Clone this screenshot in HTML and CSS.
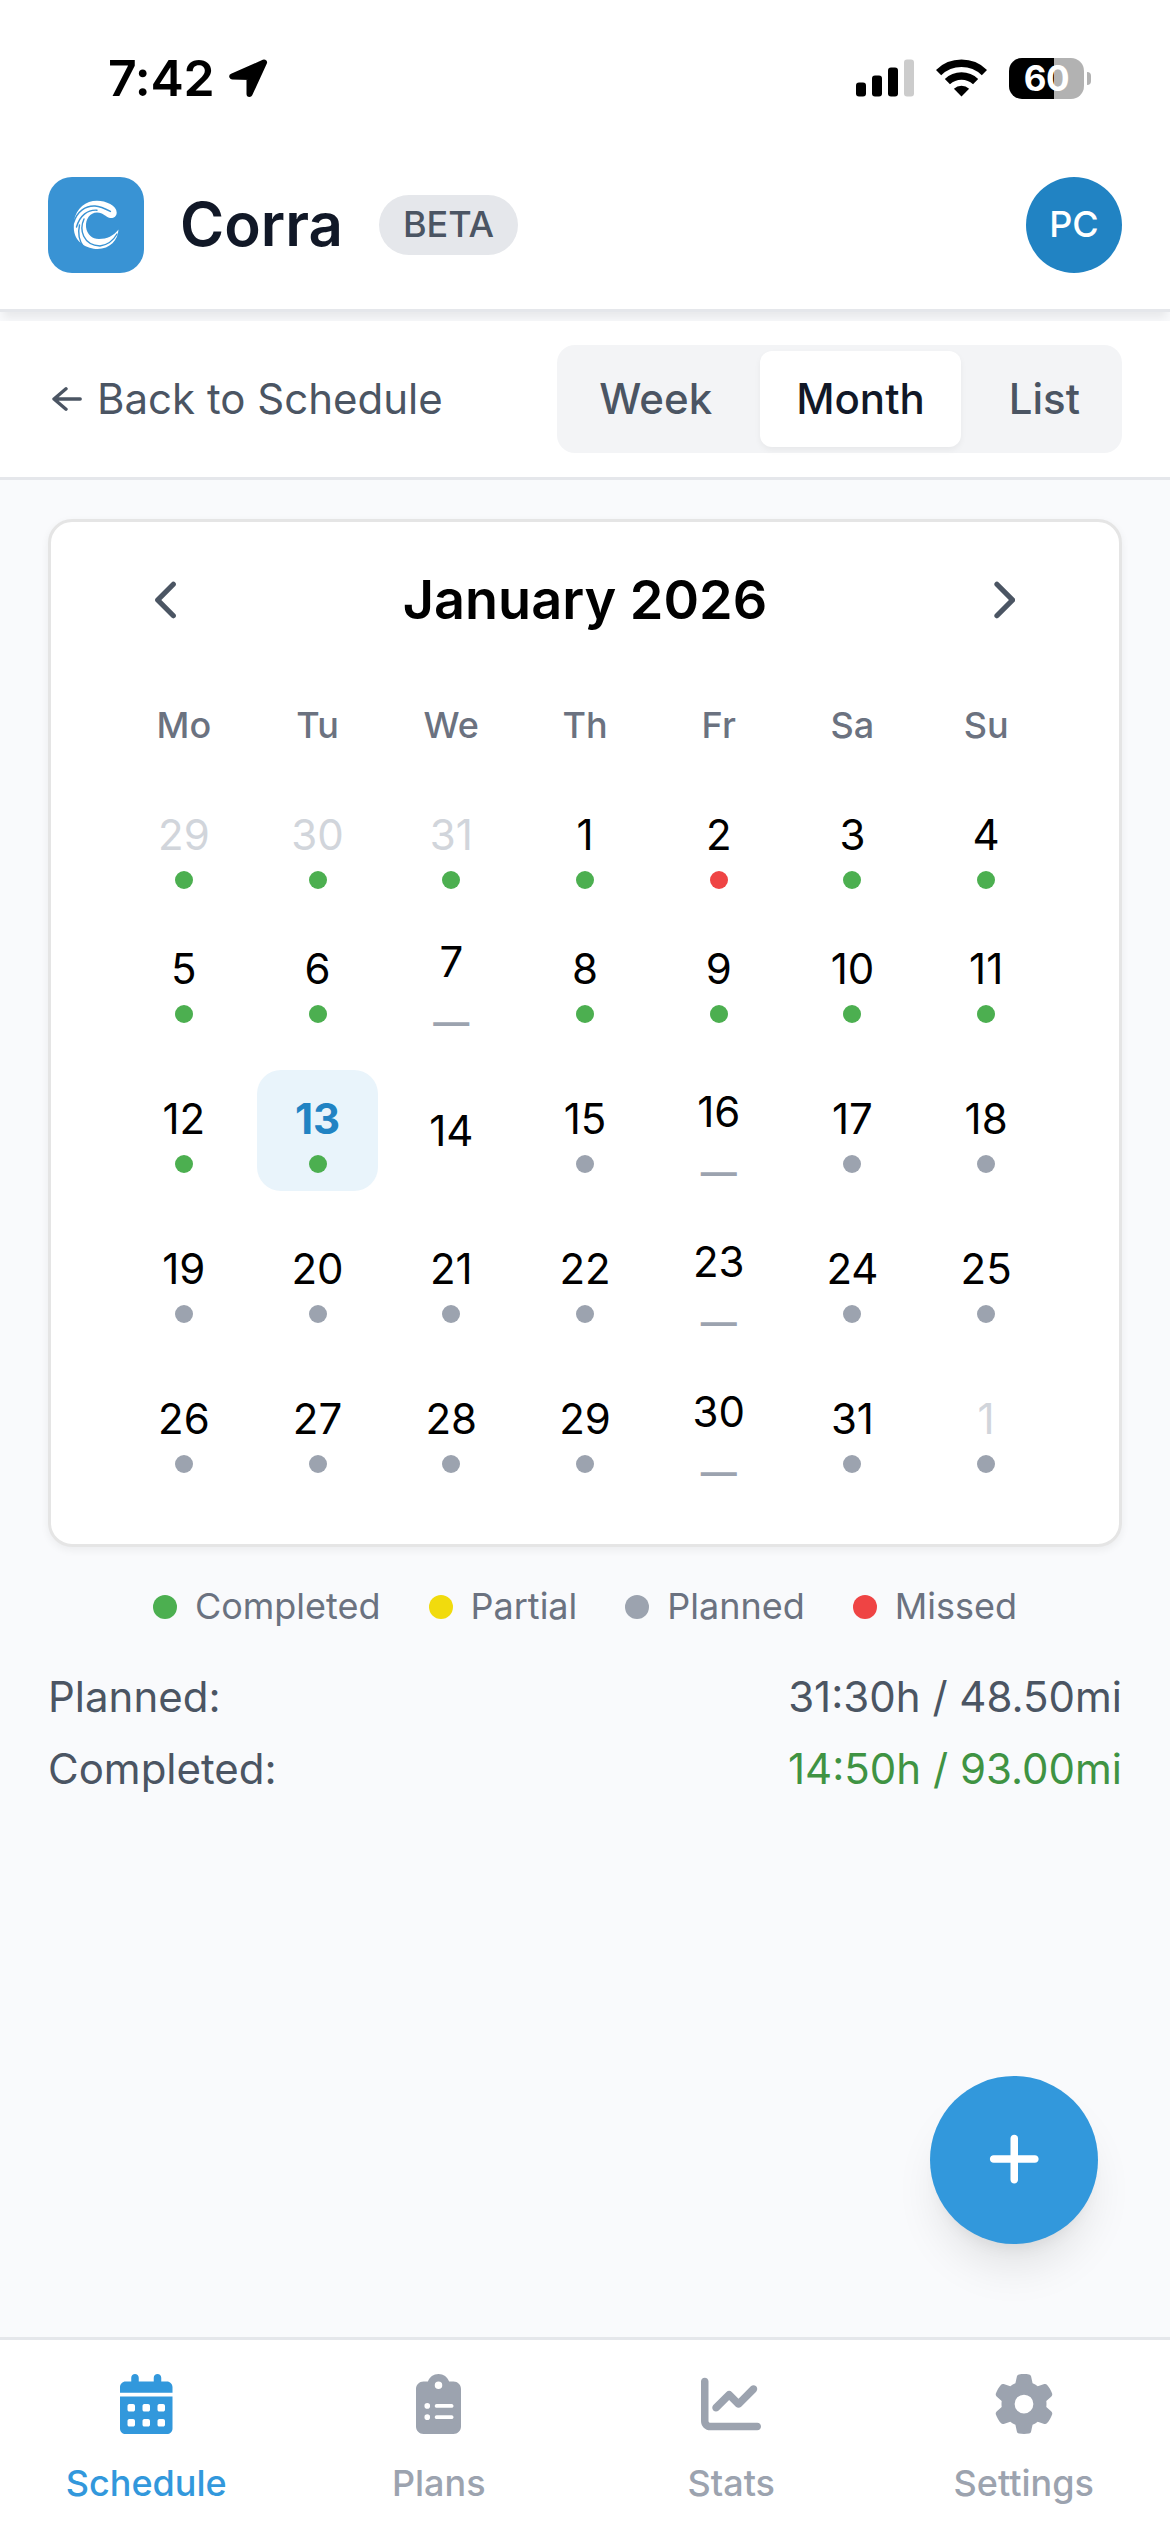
FILE: index.html
```html
<!DOCTYPE html>
<html lang="en">
<head>
    <meta charset="UTF-8">
    <meta name="viewport" content="width=device-width, initial-scale=1.0">
    <title>Corra - Schedule</title>
    <link rel="stylesheet" href="styles.css">
</head>
<body>

<div class="status-bar">
    <div class="status-left">
        <span class="time">7:42</span>
        <svg class="location" viewBox="0 0 40 40"><path d="M36 4.500L4.300 18.600L21.500 19L21.500 36Z" fill="#000" stroke="#000" stroke-width="6" stroke-linejoin="round"/></svg>
    </div>
    <div class="status-right">
        <svg class="signal" viewBox="0 0 58 38">
            <rect x="0" y="23.500" width="10" height="14" rx="3"/>
            <rect x="16" y="16.500" width="10" height="21" rx="3"/>
            <rect x="32" y="8.500" width="10" height="29" rx="3"/>
            <rect x="48" y="0.500" width="10" height="37" rx="3" fill="#ccc"/>
        </svg>
        <svg class="wifi" viewBox="0 0 51 38">
            <g fill="none" stroke="#000" stroke-width="7.500">
                <path d="M2.600 13.600A33 33 0 0 1 48.400 13.600"/>
                <path d="M11.400 22.600A20.500 20.500 0 0 1 39.600 22.600"/>
            </g>
            <path d="M25.500 37.500L17.900 29.700A11 11 0 0 1 33.100 29.700Z"/>
        </svg>
        <div class="battery">
            <div class="battery-body">60</div>
            <div class="battery-tip"></div>
        </div>
    </div>
</div>

<header class="header">
    <svg class="logo" viewBox="0 0 96 96">
        <rect width="96" height="96" rx="24" fill="#3993d4"/>
        <path fill="#fff" d="M26 44C28 31 38 23.700 49 23.700C58 23.700 68.700 28.500 68.700 35.500C68.700 39.500 65.500 41.500 62 41C57.500 40 55.500 35.500 49 35.500C42 35.500 37.500 42 38 50C39 57.500 44 62 51 62C59 62 65.500 59 70.500 52.500C70 63 62 72 49.500 72C40 72 25.500 66 25.800 50Z"/>
        <g fill="none" stroke="#3993d4" stroke-width="1.400" stroke-linecap="round">
            <path d="M25.500 46C29 34 38 28.500 47 29C53 29.300 57 31.500 62.500 34.500"/>
            <path d="M28.500 50C32 38 40 32.500 49 33.200"/>
            <path d="M31.500 48C29.500 57 31 64 36 70.500"/>
            <path d="M36 42C31 53 35 68 52 69C59 68 65 64 69 57"/>
        </g>
    </svg>
    <h1>Corra</h1>
    <span class="badge">BETA</span>
    <div class="avatar">PC</div>
</header>

<div class="toolbar">
    <a class="back">
        <svg viewBox="0 0 30 24"><path d="M28.200 12H2M14 1.800L2 12L14 22.200" fill="none" stroke="currentColor" stroke-width="3.400" stroke-linecap="round" stroke-linejoin="round"/></svg>
        <span>Back to Schedule</span>
    </a>
    <div class="tabs">
        <button class="tab">Week</button>
        <button class="tab active">Month</button>
        <button class="tab">List</button>
    </div>
</div>

<main>
    <div class="card">
        <div class="month-nav">
            <button class="prev"><svg viewBox="0 0 320 512"><path d="M9.400 233.400c-12.500 12.500-12.500 32.800 0 45.300l192 192c12.500 12.500 32.800 12.500 45.300 0s12.500-32.800 0-45.300L77.300 256 246.600 86.600c12.500-12.500 12.500-32.800 0-45.300s-32.800-12.500-45.300 0l-192 192z"/></svg></button>
            <h2>January 2026</h2>
            <button class="next"><svg viewBox="0 0 320 512"><path d="M310.600 233.400c12.500 12.500 12.500 32.800 0 45.300l-192 192c-12.500 12.500-32.800 12.500-45.300 0s-12.500-32.800 0-45.300L242.700 256 73.400 86.600c-12.500-12.500-12.500-32.800 0-45.300s32.800-12.500 45.300 0l192 192z"/></svg></button>
        </div>
        <div class="weekdays">
            <span>Mo</span><span>Tu</span><span>We</span><span>Th</span><span>Fr</span><span>Sa</span><span>Su</span>
        </div>
        <div class="days">
            <div class="day other">29<i class="dot completed"></i></div>
            <div class="day other">30<i class="dot completed"></i></div>
            <div class="day other">31<i class="dot completed"></i></div>
            <div class="day">1<i class="dot completed"></i></div>
            <div class="day">2<i class="dot missed"></i></div>
            <div class="day">3<i class="dot completed"></i></div>
            <div class="day">4<i class="dot completed"></i></div>

            <div class="day">5<i class="dot completed"></i></div>
            <div class="day">6<i class="dot completed"></i></div>
            <div class="day">7<span class="rest">—</span></div>
            <div class="day">8<i class="dot completed"></i></div>
            <div class="day">9<i class="dot completed"></i></div>
            <div class="day">10<i class="dot completed"></i></div>
            <div class="day">11<i class="dot completed"></i></div>

            <div class="day">12<i class="dot completed"></i></div>
            <div class="day today">13<i class="dot completed"></i></div>
            <div class="day">14</div>
            <div class="day">15<i class="dot planned"></i></div>
            <div class="day">16<span class="rest">—</span></div>
            <div class="day">17<i class="dot planned"></i></div>
            <div class="day">18<i class="dot planned"></i></div>

            <div class="day">19<i class="dot planned"></i></div>
            <div class="day">20<i class="dot planned"></i></div>
            <div class="day">21<i class="dot planned"></i></div>
            <div class="day">22<i class="dot planned"></i></div>
            <div class="day">23<span class="rest">—</span></div>
            <div class="day">24<i class="dot planned"></i></div>
            <div class="day">25<i class="dot planned"></i></div>

            <div class="day">26<i class="dot planned"></i></div>
            <div class="day">27<i class="dot planned"></i></div>
            <div class="day">28<i class="dot planned"></i></div>
            <div class="day">29<i class="dot planned"></i></div>
            <div class="day">30<span class="rest">—</span></div>
            <div class="day">31<i class="dot planned"></i></div>
            <div class="day other">1<i class="dot planned"></i></div>
        </div>
    </div>

    <div class="legend">
        <div class="legend-item"><i class="dot completed"></i>Completed</div>
        <div class="legend-item"><i class="dot partial"></i>Partial</div>
        <div class="legend-item"><i class="dot planned"></i>Planned</div>
        <div class="legend-item"><i class="dot missed"></i>Missed</div>
    </div>

    <div class="totals">
        <div class="total-row"><span>Planned:</span><span>31:30h / 48.50mi</span></div>
        <div class="total-row"><span>Completed:</span><span class="done">14:50h / 93.00mi</span></div>
    </div>

    <button class="fab">
        <svg viewBox="0 0 448 512"><path d="M256 80c0-17.700-14.300-32-32-32s-32 14.300-32 32V224H48c-17.700 0-32 14.300-32 32s14.300 32 32 32H192V432c0 17.700 14.300 32 32 32s32-14.300 32-32V288H400c17.700 0 32-14.300 32-32s-14.300-32-32-32H256V80z"/></svg>
    </button>
</main>

<nav class="bottom-nav">
    <a class="nav-item active">
        <svg viewBox="0 0 448 512"><path d="M128 0c17.700 0 32 14.300 32 32V64H288V32c0-17.700 14.300-32 32-32s32 14.300 32 32V64h48c26.500 0 48 21.500 48 48v48H0V112C0 85.500 21.500 64 48 64H96V32c0-17.700 14.300-32 32-32zM0 192H448V464c0 26.500-21.500 48-48 48H48c-26.500 0-48-21.500-48-48V192zm64 80v32c0 8.800 7.200 16 16 16h32c8.800 0 16-7.200 16-16V272c0-8.800-7.200-16-16-16H80c-8.800 0-16 7.200-16 16zm128 0v32c0 8.800 7.200 16 16 16h32c8.800 0 16-7.200 16-16V272c0-8.800-7.200-16-16-16H208c-8.800 0-16 7.200-16 16zm144-16c-8.800 0-16 7.200-16 16v32c0 8.800 7.200 16 16 16h32c8.800 0 16-7.200 16-16V272c0-8.800-7.200-16-16-16H336zM64 400v32c0 8.800 7.200 16 16 16h32c8.800 0 16-7.200 16-16V400c0-8.800-7.200-16-16-16H80c-8.800 0-16 7.200-16 16zm144-16c-8.800 0-16 7.200-16 16v32c0 8.800 7.200 16 16 16h32c8.800 0 16-7.200 16-16V400c0-8.800-7.200-16-16-16H208zm112 16v32c0 8.800 7.200 16 16 16h32c8.800 0 16-7.200 16-16V400c0-8.800-7.200-16-16-16H336c-8.800 0-16 7.200-16 16z"/></svg>
        <span>Schedule</span>
    </a>
    <a class="nav-item">
        <svg viewBox="0 0 384 512"><path d="M192 0c-41.800 0-77.400 26.700-90.500 64H64C28.700 64 0 92.700 0 128V448c0 35.300 28.700 64 64 64H320c35.300 0 64-28.700 64-64V128c0-35.300-28.700-64-64-64H282.500C269.400 26.700 233.800 0 192 0zm0 64a32 32 0 1 1 0 64 32 32 0 1 1 0-64zM72 272a24 24 0 1 1 48 0 24 24 0 1 1 -48 0zm104-16H304c8.800 0 16 7.200 16 16s-7.200 16-16 16H176c-8.800 0-16-7.200-16-16s7.200-16 16-16zM72 368a24 24 0 1 1 48 0 24 24 0 1 1 -48 0zm88 0c0-8.800 7.200-16 16-16H304c8.800 0 16 7.200 16 16s-7.200 16-16 16H176c-8.800 0-16-7.200-16-16z"/></svg>
        <span>Plans</span>
    </a>
    <a class="nav-item">
        <svg viewBox="0 0 512 512"><path d="M64 64c0-17.700-14.300-32-32-32S0 46.300 0 64V400c0 44.200 35.800 80 80 80H480c17.700 0 32-14.300 32-32s-14.300-32-32-32H80c-8.800 0-16-7.200-16-16V64zm406.600 86.600c12.500-12.500 12.500-32.800 0-45.300s-32.800-12.500-45.300 0L320 210.700l-57.400-57.400c-12.500-12.500-32.800-12.500-45.300 0l-112 112c-12.500 12.500-12.500 32.800 0 45.300s32.800 12.500 45.300 0L240 221.300l57.400 57.400c12.500 12.500 32.800 12.500 45.300 0l128-128z"/></svg>
        <span>Stats</span>
    </a>
    <a class="nav-item">
        <svg viewBox="0 0 512 512"><path d="M495.900 166.600c3.200 8.700 .5 18.400-6.400 24.600l-43.300 39.400c1.100 8.300 1.700 16.800 1.700 25.400s-.6 17.100-1.700 25.400l43.300 39.400c6.900 6.200 9.600 15.900 6.400 24.600c-4.400 11.900-9.700 23.300-15.800 34.300l-4.700 8.100c-6.600 11-14 21.400-22.100 31.200c-5.900 7.200-15.700 9.600-24.500 6.800l-55.700-17.700c-13.400 10.300-28.200 18.900-44 25.400l-12.500 57.100c-2 9.100-9 16.300-18.200 17.800c-13.800 2.300-28 3.500-42.500 3.500s-28.700-1.200-42.500-3.500c-9.200-1.500-16.200-8.700-18.200-17.800l-12.500-57.100c-15.800-6.500-30.600-15.100-44-25.400L83.100 425.900c-8.800 2.800-18.600 .3-24.500-6.800c-8.100-9.800-15.500-20.200-22.100-31.200l-4.700-8.100c-6.100-11-11.400-22.400-15.800-34.300c-3.200-8.700-.5-18.400 6.400-24.600l43.300-39.400C64.600 273.100 64 264.600 64 256s.6-17.100 1.700-25.400L22.400 191.200c-6.900-6.200-9.600-15.900-6.400-24.600c4.400-11.900 9.700-23.300 15.800-34.300l4.700-8.100c6.600-11 14-21.400 22.100-31.200c5.900-7.200 15.700-9.600 24.500-6.800l55.700 17.700c13.400-10.300 28.200-18.900 44-25.400l12.500-57.100c2-9.100 9-16.300 18.200-17.800C227.300 1.200 241.500 0 256 0s28.700 1.200 42.500 3.500c9.200 1.500 16.200 8.700 18.200 17.800l12.500 57.100c15.800 6.500 30.600 15.100 44 25.400l55.700-17.700c8.800-2.800 18.600-.3 24.500 6.800c8.100 9.800 15.500 20.200 22.100 31.200l4.700 8.100c6.100 11 11.400 22.400 15.800 34.300zM256 336a80 80 0 1 0 0-160 80 80 0 1 0 0 160z"/></svg>
        <span>Settings</span>
    </a>
</nav>

</body>
</html>
```

FILE: styles.css
```css
* {
    box-sizing: border-box;
}

body {
    margin: 0;
    height: 2532px;
    display: flex;
    flex-direction: column;
    background-color: #f9fafc;
    color: #000;
    font-family: Inter, "Liberation Sans", sans-serif;
    font-size: 42px;
    line-height: 60px;
}

h1, h2 {
    margin: 0;
    font-weight: 600;
}

button {
    border: none;
    padding: 0;
    background: none;
    font: inherit;
    color: inherit;
}

svg {
    display: block;
    flex-shrink: 0;
    fill: currentColor;
}

/* Status bar */
.status-bar {
    height: 156px;
    padding: 0 79px 0 108px;
    background-color: #fff;
    display: flex;
    align-items: center;
    justify-content: space-between;
}

.status-left, .status-right {
    display: flex;
    align-items: center;
}

.time {
    width: 120px;
    font-size: 50px;
    font-weight: 600;
    letter-spacing: -0.3px;
}

.location {
    width: 40px;
    height: 40px;
}

.signal {
    width: 58px;
    height: 38px;
    margin-right: 22px;
}

.wifi {
    width: 51px;
    height: 38px;
    margin-right: 22px;
}

.battery {
    display: flex;
    align-items: center;
    gap: 3px;
}

.battery-body {
    width: 75px;
    height: 41px;
    border-radius: 13px;
    background: linear-gradient(to right, #000 60%, #b2b2b2 60%);
    color: #fff;
    font-size: 35px;
    font-weight: 700;
    line-height: 41px;
    letter-spacing: -0.5px;
    text-align: center;
}

.battery-tip {
    width: 4px;
    height: 13px;
    border-radius: 0 4px 4px 0;
    background-color: #b2b2b2;
}

/* Header */
.header {
    height: 156px;
    padding: 21px 48px 36px;
    display: flex;
    align-items: center;
    gap: 36px;
    background-color: #fff;
    border-bottom: 3px solid #e5e7eb;
    box-shadow: 0 9px 9px -3px rgba(0,0,0,0.07);
}

.logo {
    width: 96px;
    height: 96px;
}

.header h1 {
    margin-bottom: 2px;
    font-size: 60px;
    line-height: 84px;
    color: #111827;
}

.badge {
    padding: 5px 24px 7px;
    border-radius: 30px;
    background-color: #e5e7eb;
    color: #4b5563;
    font-size: 36px;
    font-weight: 500;
    line-height: 48px;
}

.avatar {
    width: 96px;
    height: 96px;
    margin-left: auto;
    border-radius: 50%;
    background-color: #2183c3;
    color: #fff;
    font-size: 36px;
    font-weight: 500;
    line-height: 94px;
    text-align: center;
}

/* Toolbar */
.toolbar {
    height: 159px;
    margin-top: 9px;
    padding: 24px 48px;
    display: flex;
    align-items: center;
    justify-content: space-between;
    background-color: #fff;
    border-bottom: 3px solid #e5e7eb;
}

.back {
    display: flex;
    align-items: center;
    gap: 15px;
    padding-left: 4px;
    color: #4b5563;
}

.back svg {
    width: 30px;
    height: 24px;
}

.tabs {
    display: flex;
    gap: 12px;
    padding: 6px;
    border-radius: 18px;
    background-color: #f3f4f6;
}

.tab {
    height: 96px;
    padding: 0 36px;
    border-radius: 12px;
    color: #4b5563;
    font-weight: 500;
}

.tab.active {
    background-color: #fff;
    color: #111827;
    box-shadow: 0 3px 6px rgba(0,0,0,0.05);
}

/* Calendar */
main {
    flex: 1;
    position: relative;
    padding: 39px 48px 0;
}

.card {
    padding: 36px 72px;
    background-color: #fff;
    border: 3px solid #e5e5e5;
    border-radius: 24px;
    box-shadow: 0 3px 9px rgba(0,0,0,0.06);
}

.month-nav {
    height: 84px;
    display: flex;
    align-items: center;
    justify-content: space-between;
}

.month-nav h2 {
    font-size: 54px;
}

.month-nav button {
    width: 90px;
    height: 84px;
    display: flex;
    align-items: center;
    justify-content: center;
    color: #4b5563;
}

.month-nav svg {
    height: 42px;
}

.weekdays, .days {
    display: grid;
    grid-template-columns: repeat(7, 1fr);
    column-gap: 12px;
    text-align: center;
}

.weekdays {
    margin-top: 24px;
    padding-bottom: 2px;
    color: #6b7280;
    font-size: 36px;
    font-weight: 500;
    line-height: 118px;
}

.days {
    row-gap: 12px;
    align-items: start;
}

.day {
    min-height: 121.7px;
    padding: 12px 0;
    border-radius: 24px;
    display: flex;
    flex-direction: column;
    align-items: center;
    justify-content: center;
    gap: 6px;
}

.day.other {
    color: #d1d5db;
}

.day.today {
    background-color: #e9f4fb;
    color: #2183c3;
    font-weight: 700;
}

/* dash under a rest day */
.rest {
    color: #9ca3af;
    font-size: 36px;
    font-weight: 600;
    line-height: 48px;
}

.dot {
    width: 18px;
    height: 18px;
    border-radius: 50%;
}

.completed {
    background-color: #4caf50;
}

.partial {
    background-color: #f1db0d;
}

.planned {
    background-color: #9ca3af;
}

.missed {
    background-color: #ef4444;
}

.legend {
    margin: 35px 0 37px;
    display: flex;
    justify-content: center;
    gap: 48px;
    color: #6b7280;
    font-size: 36px;
    line-height: 48px;
}

.legend-item {
    display: flex;
    align-items: center;
    gap: 18px;
}

.legend-item .dot {
    width: 24px;
    height: 24px;
    margin-top: 2px;
}

.totals {
    display: flex;
    flex-direction: column;
    gap: 12px;
    color: #4b5563;
}

.total-row {
    display: flex;
    justify-content: space-between;
}

.done {
    color: #3f9343;
}

.fab {
    position: absolute;
    right: 72px;
    bottom: 93px;
    width: 168px;
    height: 168px;
    border-radius: 50%;
    display: flex;
    align-items: center;
    justify-content: center;
    background-color: #3298dc;
    color: #fff;
    box-shadow: 0 30px 45px -9px rgba(0,0,0,0.1), 0 12px 18px -12px rgba(0,0,0,0.1);
}

.fab svg {
    height: 60px;
    margin-bottom: 3px;
}

/* Bottom navigation */
.bottom-nav {
    height: 195px;
    display: grid;
    grid-template-columns: repeat(4, 1fr);
    background-color: #fff;
    border-top: 3px solid #e5e7eb;
}

.nav-item {
    padding-top: 34px;
    display: flex;
    flex-direction: column;
    align-items: center;
    gap: 25px;
    color: #9ca3af;
    font-size: 36px;
    font-weight: 500;
    line-height: 48px;
}

.nav-item svg {
    height: 60px;
}

.nav-item.active {
    color: #3298dc;
}
```
